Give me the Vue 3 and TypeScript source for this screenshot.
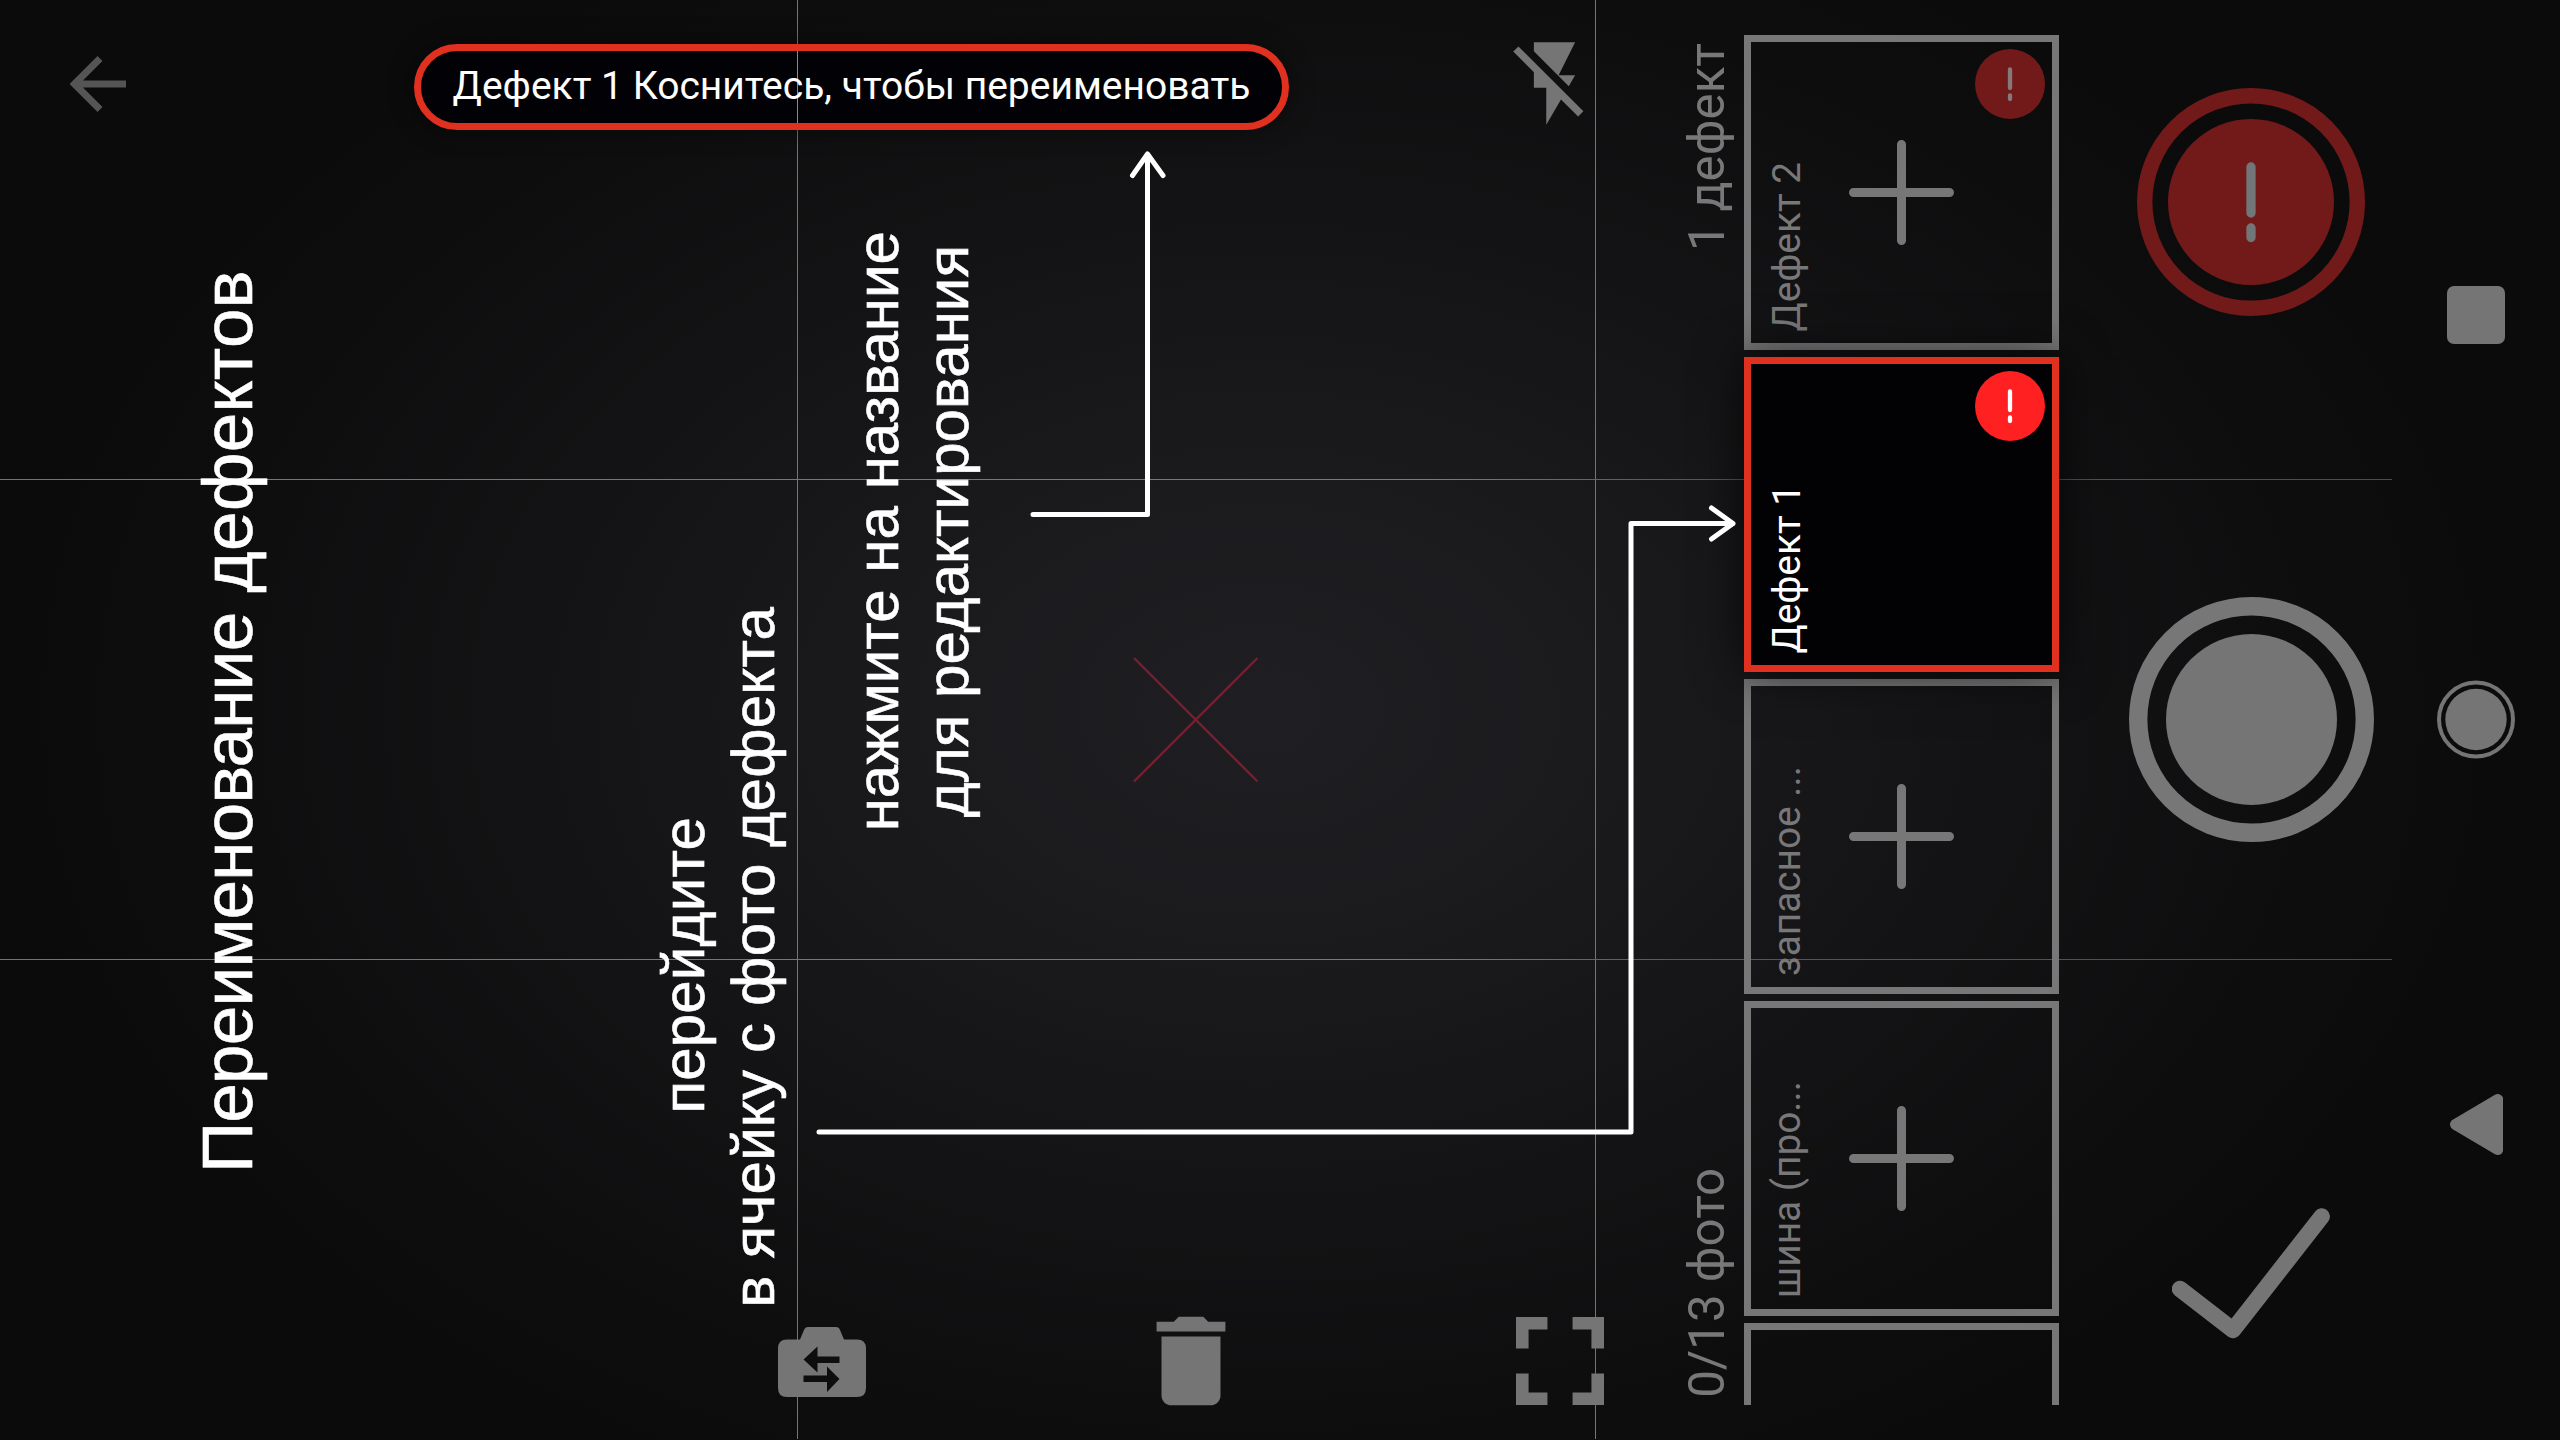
<script setup lang="ts">
interface Cell {
  id: number
  label: string
  active?: boolean
  alert?: boolean
  plus?: boolean
}

const cells: Cell[] = [
  { id: 1, label: 'Дефект 2', alert: true, plus: true },
  { id: 2, label: 'Дефект 1', alert: true, active: true },
  { id: 3, label: 'запасное ...', plus: true },
  { id: 4, label: 'шина (про...', plus: true },
  { id: 5, label: '' },
]
</script>

<template>
  <div class="screen">
    <svg class="guides" width="2560" height="1440" viewBox="0 0 2560 1440">
      <defs>
        <linearGradient id="fade" gradientUnits="userSpaceOnUse" x1="0" y1="0" x2="2392" y2="0">
          <stop offset="0" stop-color="#747474" />
          <stop offset="0.600" stop-color="#7a7a7a" />
          <stop offset="0.700" stop-color="#585858" />
          <stop offset="1" stop-color="#4c4c4c" />
        </linearGradient>
      </defs>
      <path class="guide" d="M797.5 0V1439M1595.5 0V1439" />
      <path class="guide across" d="M0 479.5H2392M0 959.5H2392" />
      <path class="focus" d="M1134 658L1257.500 781.500M1257.500 658L1134 781.500" />
    </svg>

    <main class="viewfinder">
      <header class="topbar">
        <svg class="back" width="56" height="56" viewBox="0 0 56 56">
          <path d="M30 2.500L4.500 28L30 53.500M4.500 28H56" />
        </svg>
        <div class="pill"><span>Дефект 1 Коснитесь, чтобы переименовать</span></div>
        <svg class="flash" width="99" height="99" viewBox="0 0 24 24">
          <path d="M3.270 3L2 4.270l5 5V13h3v9l3.580-6.140L17.730 20 19 18.730 3.270 3zM17 10h-4l4-8H7v2.180l8.460 8.460L17 10z" />
        </svg>
      </header>
      <footer class="tools">
        <svg width="88" height="88" viewBox="0 0 88 88">
          <path fill-rule="evenodd" d="M30 10H58Q61 10 62 13L66 22.500H79Q88 22.500 88 31.500V71Q88 80 79 80H9Q0 80 0 71V31.500Q0 22.500 9 22.500H22L26 13Q27 10 30 10ZM25.500 42.500L39.500 29.500V39.500H61.500V46H39.500V55.500ZM61.500 62L49 49.500V58.500H25.500V65H49V75Z" />
        </svg>
        <svg width="118" height="118" viewBox="0 0 24 24">
          <path d="M6 19c0 1.100.9 2 2 2h8c1.100 0 2-.9 2-2V7H6v12zM19 4h-3.500l-1-1h-5l-1 1H5v2h14V4z" />
        </svg>
        <svg width="88" height="88" viewBox="5 5 14 14">
          <path d="M7 14H5v5h5v-2H7v-3zm-2-4h2V7h3V5H5v5zm12 7h-3v2h5v-5h-2v3zM14 5v2h3v3h2V5h-5z" />
        </svg>
      </footer>
    </main>

    <aside class="counters">
      <span class="vtext">1 дефект</span>
      <span class="vtext">0/13 фото</span>
    </aside>

    <section class="strip">
      <article v-for="cell in cells" :key="cell.id" class="cell" :class="{ active: cell.active }">
        <span class="vtext label">{{ cell.label }}</span>
        <svg v-if="cell.plus" class="plus" width="105" height="105" viewBox="0 0 105 105">
          <path d="M52.500 4.500V100.500M4.500 52.500H100.500" />
        </svg>
        <svg v-if="cell.alert" class="badge" width="70" height="70" viewBox="0 0 70 70">
          <circle cx="35" cy="35" r="35" />
          <path d="M35 20.500V39M35 46.500V50" />
        </svg>
      </article>
    </section>

    <section class="controls">
      <svg width="228" height="228" viewBox="0 0 228 228">
        <circle class="ring-red" cx="114" cy="114" r="106.300" />
        <circle class="disc-red" cx="114" cy="114" r="83" />
        <path class="bang" d="M114 79V125M114 140V149.500" />
      </svg>
      <svg width="245" height="245" viewBox="0 0 245 245">
        <circle class="ring" cx="122.500" cy="122.500" r="113.300" />
        <circle cx="122.500" cy="122.500" r="85.500" />
      </svg>
      <svg width="158" height="131" viewBox="0 0 158 131">
        <path class="check" d="M8 81L61 122L149.700 8.500" />
      </svg>
    </section>

    <nav class="system">
      <svg width="58" height="58" viewBox="0 0 58 58"><rect width="58" height="58" rx="7" /></svg>
      <svg width="78" height="79" viewBox="0 0 78 79">
        <circle class="ring-thin" cx="39" cy="39.500" r="37" />
        <circle cx="39" cy="39.500" r="30.700" />
      </svg>
      <svg width="54" height="61" viewBox="0 0 54 61">
        <path class="triangle" d="M6.500 30.500L48.800 5.500V55.500Z" />
      </svg>
    </nav>

    <div class="tutorial">
      <h1 class="vtext title"><span class="tight">Переименование</span> <span class="loose">дефектов</span></h1>
      <p class="vtext hint hint-cell"><span class="lead">перейдите</span><br />в ячейку с фото дефекта</p>
      <p class="vtext hint hint-name">нажмите на название<br />для редактирования</p>
    </div>
    <svg class="pointers" width="2560" height="1440" viewBox="0 0 2560 1440">
      <path d="M1033 514.500H1147.500V154M1132.500 175.500L1147.500 154L1163 175.500" />
      <path d="M819 1132H1631V523.500H1733M1711.500 508L1733 523.500L1711.500 539" />
    </svg>
  </div>
</template>

<style>
body {
  margin: 0;
  background: #0b0b0b;
}
</style>

<style scoped>
.screen {
  position: relative;
  display: flex;
  width: 2560px;
  height: 1440px;
  overflow: hidden;
  background: radial-gradient(ellipse 1250px 860px at 1260px 710px, #1f1f23 0%, #1b1b1e 25%, #141416 55%, #0e0e0f 82%, #0b0b0b 100%);
  font-family: Roboto, "Liberation Sans", sans-serif;
  color: #787878;
}

svg {
  display: block;
  flex: none;
  fill: #757575;
}

.guides,
.pointers,
.tutorial {
  position: absolute;
  inset: 0;
}

.guide {
  fill: none;
  stroke: #757575;
  stroke-width: 1;
}

.across {
  stroke: url(#fade);
}

.focus {
  fill: none;
  stroke: #7b1c30;
  stroke-width: 2.4;
}

.viewfinder {
  position: relative;
  display: flex;
  flex-direction: column;
  justify-content: space-between;
  width: 1677px;
  height: 1440px;
}

.topbar {
  display: flex;
  align-items: flex-start;
}

.back {
  margin: 56px 288px 0 70px;
  fill: none;
  stroke: #555;
  stroke-width: 7;
}

.pill {
  position: relative;
  box-sizing: border-box;
  display: flex;
  justify-content: center;
  align-items: center;
  width: 875px;
  height: 86px;
  margin: 44px 216px 0 0;
  border: 7px solid #e03020;
  border-radius: 43px;
  background: #020105;
  box-shadow: 0 0 26px rgba(0, 0, 0, 0.45);
  color: #fff;
  font-size: 39px;
  line-height: 70px;
  white-space: nowrap;
}

.pill::before {
  content: "";
  position: absolute;
  left: 376px;
  top: 0;
  width: 1px;
  height: 72px;
  background: #8a8a8a;
}

.pill span {
  position: relative;
  padding-bottom: 2px;
}

.flash {
  margin-top: 34px;
}

.tools {
  display: flex;
  align-items: flex-end;
  justify-content: space-between;
  width: 826px;
  margin: 0 0 35px 778px;
}

.tools svg:nth-child(2) {
  transform: translateY(15px);
}

.vtext {
  writing-mode: vertical-rl;
  transform: rotate(180deg);
  white-space: nowrap;
}

.counters {
  position: relative;
  display: flex;
  flex-direction: column;
  justify-content: space-between;
  box-sizing: border-box;
  width: 60px;
  height: 1440px;
  padding: 43px 0 42px;
  font-size: 49.3px;
  line-height: 60px;
}

.strip {
  position: relative;
  display: flex;
  flex-direction: column;
  gap: 7px;
  width: 315px;
  height: 1370px;
  margin: 35px 0 0 7px;
}

.strip {
  clip-path: inset(-60px -60px 0 -60px);
}

.cell {
  position: relative;
  box-sizing: border-box;
  flex: none;
  display: flex;
  align-items: center;
  justify-content: center;
  width: 315px;
  height: 315px;
  border: 7px solid #777;
}

.cell.active {
  z-index: 2;
  border-color: #e03020;
  background: #020104;
  box-shadow: 0 0 44px rgba(0, 0, 0, 0.7);
  color: #fff;
}

.label {
  position: absolute;
  left: 12px;
  bottom: 11px;
  font-size: 38.8px;
  line-height: 48px;
}

.plus {
  fill: none;
  stroke: #777;
  stroke-width: 9;
  stroke-linecap: round;
}

.badge {
  position: absolute;
  top: 7px;
  right: 7px;
  fill: #721a1a;
}

.badge path {
  fill: none;
  stroke: #85797a;
  stroke-width: 4.3;
  stroke-linecap: round;
}

.active .badge {
  fill: #ff2022;
}

.active .badge path {
  stroke: #fff;
}

.controls {
  position: relative;
  display: flex;
  flex-direction: column;
  align-items: flex-start;
  width: 245px;
  margin-left: 70px;
  padding-top: 88px;
}

.controls svg:first-child {
  margin-left: 8px;
}

.controls svg:nth-child(2) {
  margin: 281px 0 366px;
}

.controls svg:last-child {
  margin-left: 43px;
}

.ring-red {
  fill: none;
  stroke: #721a1a;
  stroke-width: 15.4;
}

.disc-red {
  fill: #721a1a;
}

.bang {
  stroke: #727678;
  stroke-width: 9.3;
  stroke-linecap: round;
}

.ring {
  fill: none;
  stroke: #777;
  stroke-width: 18.4;
}

.check {
  fill: none;
  stroke: #757575;
  stroke-width: 16.5;
  stroke-linecap: round;
  stroke-linejoin: round;
}

.system {
  position: relative;
  display: flex;
  flex-direction: column;
  align-items: center;
  width: 80px;
  margin-left: 62px;
  padding-top: 286px;
}

.system svg:nth-child(2) {
  margin: 336px 0 335px;
}

.ring-thin {
  fill: none;
  stroke: #757575;
  stroke-width: 4;
}

.triangle {
  stroke: #757575;
  stroke-width: 11;
  stroke-linejoin: round;
}

.tutorial {
  display: flex;
  align-items: flex-start;
  color: #fff;
  font-family: "Liberation Sans", Arial, sans-serif;
  -webkit-text-stroke: 0.6px #fff;
}

.title {
  width: 80px;
  margin: 270px 0 0 188px;
  font-size: 71px;
  font-weight: 400;
  line-height: 80px;
}

.tight {
  letter-spacing: -0.75px;
}

.loose {
  letter-spacing: 0.4px;
}

.hint {
  width: 140px;
  margin: 0;
  font-size: 60px;
  line-height: 70px;
  letter-spacing: 0.2px;
  text-align: center;
}

.lead {
  padding-inline-end: 16px;
}

.hint-cell {
  margin: 607px 0 0 381px;
}

.hint-name {
  margin: 231px 0 0 54px;
  letter-spacing: 0.05px;
}

.pointers path {
  fill: none;
  stroke: #fff;
  stroke-width: 5;
  stroke-linecap: round;
  stroke-linejoin: round;
}
</style>
